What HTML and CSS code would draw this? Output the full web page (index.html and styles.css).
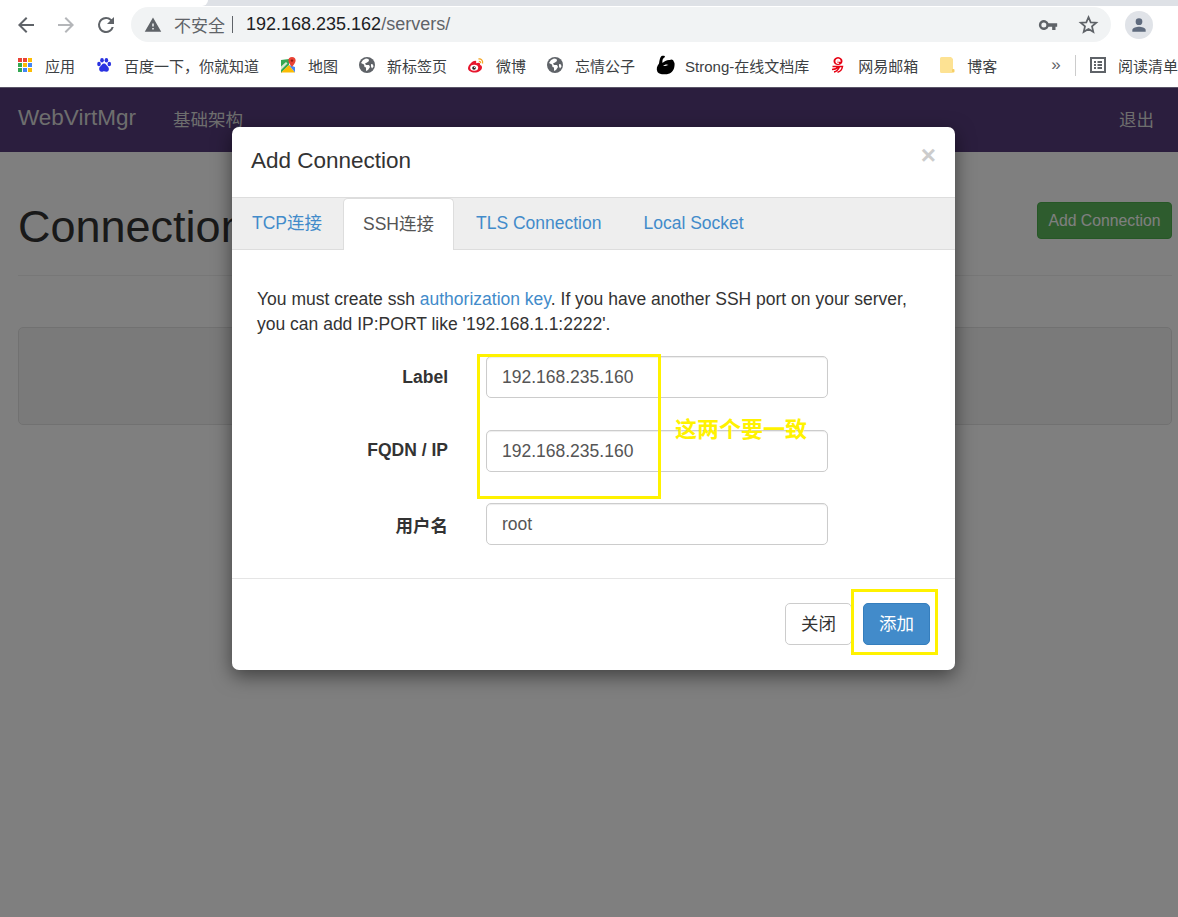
FILE: index.html
```html
<!DOCTYPE html>
<html lang="zh-CN">
<head>
    <meta charset="UTF-8">
    <meta name="viewport" content="width=device-width, initial-scale=1.0">
    <title>WebVirtMgr</title>
    <link rel="stylesheet" href="styles.css">
</head>
<body>

    <!-- 浏览器顶部 -->
    <div class="browser">
        <div class="tabstrip"><span class="tab-edge"></span></div>
        <div class="toolbar">
            <svg class="tool" viewBox="0 0 24 24"><path fill="#5f6368" d="M20 11H7.83l5.59-5.59L12 4l-8 8 8 8 1.41-1.41L7.83 13H20z"/></svg>
            <svg class="tool" viewBox="0 0 24 24"><path fill="#b4b6b9" d="M4 11h12.17l-5.59-5.59L12 4l8 8-8 8-1.41-1.41L16.17 13H4z"/></svg>
            <svg class="tool" viewBox="0 0 24 24"><path fill="#5f6368" d="M17.65 6.35A7.96 7.96 0 0 0 12 4a8 8 0 1 0 7.74 10h-2.08A6 6 0 1 1 12 6c1.66 0 3.14.69 4.22 1.78L13 11h7V4z"/></svg>
            <div class="omnibox">
                <svg class="warn" viewBox="0 0 24 24"><path fill="#5f6368" d="M1 21h22L12 2zm12-3h-2v-2h2zm0-4h-2v-4h2z"/></svg>
                <span class="insecure">不安全</span>
                <span class="url-sep"></span>
                <span class="url"><b>192.168.235.162</b>/servers/</span>
                <svg class="key" viewBox="0 0 24 24"><path fill="#5f6368" d="M12.65 10A6 6 0 1 0 12.65 14H17v4h4v-4h2v-4zM7 15a3 3 0 1 1 0-6 3 3 0 0 1 0 6z"/></svg>
                <svg class="star" viewBox="0 0 24 24"><path fill="none" stroke="#5f6368" stroke-width="2" d="M12 3.6l2.5 5.9 6.4.5-4.9 4.2 1.5 6.2-5.5-3.3-5.5 3.3 1.5-6.2L3.1 10l6.4-.5z"/></svg>
            </div>
            <div class="avatar">
                <svg viewBox="0 0 24 24"><circle cx="12" cy="8" r="4" fill="#5f6b7e"/><path fill="#5f6b7e" d="M4 20v-2c0-2.7 5.3-4 8-4s8 1.300 8 4v2z"/></svg>
            </div>
        </div>
        <div class="bookmarks">
            <a class="mark">
                <svg viewBox="0 0 16 16">
                    <rect x="1" y="1" width="4" height="4" fill="#ea4335"/><rect x="6" y="1" width="4" height="4" fill="#ea4335"/><rect x="11" y="1" width="4" height="4" fill="#fbbc04"/>
                    <rect x="1" y="6" width="4" height="4" fill="#34a853"/><rect x="6" y="6" width="4" height="4" fill="#fbbc04"/><rect x="11" y="6" width="4" height="4" fill="#4285f4"/>
                    <rect x="1" y="11" width="4" height="4" fill="#34a853"/><rect x="6" y="11" width="4" height="4" fill="#4285f4"/><rect x="11" y="11" width="4" height="4" fill="#fbbc04"/>
                </svg>应用</a>
            <a class="mark">
                <svg viewBox="0 0 16 16" fill="#2932e1">
                    <ellipse cx="3" cy="7" rx="1.800" ry="2.200"/><ellipse cx="6" cy="3.200" rx="1.800" ry="2.300"/><ellipse cx="10.400" cy="3.200" rx="1.800" ry="2.300"/><ellipse cx="13.300" cy="7" rx="1.800" ry="2.200"/>
                    <path d="M8 6.500c-2 0-2.500 2-4 3.300-1.500 1.400-1 5 1.700 5 1 0 1.500-.5 2.300-.5s1.500.5 2.500.5c2.700 0 3-3.500 1.500-5C10.500 8.500 10 6.500 8 6.500z"/>
                </svg>百度一下，你就知道</a>
            <a class="mark">
                <svg viewBox="0 0 16 16">
                    <path fill="#34a853" d="M1 3l8-1v6l-8 8z"/><path fill="#fbbc04" d="M1 15.500L9 8l6 7.500z"/><path fill="#4285f4" d="M9 8l6 2v5.500z"/><path fill="#d8e8d0" d="M1 9.500L6 5l1.500 1.500L1 13z"/>
                    <path fill="#ea4335" d="M12 0a3.600 3.600 0 0 0-3.600 3.600C8.400 6.200 12 10 12 10s3.600-3.800 3.600-6.400A3.600 3.600 0 0 0 12 0z"/><circle cx="12" cy="3.600" r="1.200" fill="#8e1c13"/>
                </svg>地图</a>
            <a class="mark">
                <svg viewBox="0 0 16 16"><circle cx="8" cy="8" r="8" fill="#5f6368"/><path fill="#fff" d="M7 1.500L4 3 2 6l3 1.500.5 2.500 1.500.5V14l2-1 2-3-1-2H7L6 6.500 8 5.500 10 4 9.500 2zM12 7l2 .5.500 2-1.500 2-1-2z"/></svg>新标签页</a>
            <a class="mark">
                <svg viewBox="0 0 16 16">
                    <path fill="#e6162d" d="M6.500 15.500C3.300 15.500 0 14 0 11.300 0 9.500 1.300 7.500 3 6c2-1.900 4.300-2.600 5-1.800.4.400.3 1.200 0 2 1.800-.7 3.500-.7 4 .2.300.5.200 1.100 0 1.700 1.200.4 2 1 2 2.300 0 2.600-3.500 5.100-7.500 5.100z"/>
                    <ellipse cx="6.200" cy="10.800" rx="4" ry="3" fill="#fff"/><circle cx="6" cy="11" r="1.800" fill="#222"/><circle cx="6.500" cy="10.500" r=".6" fill="#fff"/>
                    <path fill="none" stroke="#f5a623" stroke-width="1.300" d="M10.500 2c2.500-.6 4.700 1.500 4 4.500M10.800 4.400c1.200-.2 2 .6 1.700 1.800"/>
                </svg>微博</a>
            <a class="mark">
                <svg viewBox="0 0 16 16"><circle cx="8" cy="8" r="8" fill="#5f6368"/><path fill="#fff" d="M7 1.500L4 3 2 6l3 1.500.5 2.500 1.500.5V14l2-1 2-3-1-2H7L6 6.500 8 5.500 10 4 9.500 2zM12 7l2 .5.500 2-1.500 2-1-2z"/></svg>忘情公子</a>
            <a class="mark">
                <svg class="wide" viewBox="0 0 20 20"><path fill="#000" d="M5.500 1C8 .5 9 1 9 2 7 3 6 5 6.500 8c1.500-2 5-3.500 7.500-3 .5-.5 1.500-1 3 0l1.500 3c.5 4-1 9-5 10.500C9 20 3 19.500 1.500 17 0 14 1 11 3 8.500 3.500 5 4 2.500 5.500 1z"/><path fill="#fff" d="M7 11c1.500-1.500 4-2 5.500-1-1.500.5-3 1-5.500 1z"/></svg>Strong-在线文档库</a>
            <a class="mark">
                <svg viewBox="0 0 16 16"><path fill="#e60012" d="M8 0a5 4 0 0 1 4.500 4.300c0 2.200-2 3.700-4.500 3.700S3.500 6.500 3.500 4.300A5 4 0 0 1 8 0z"/><path fill="none" stroke="#fff" stroke-width="1.300" d="M6 4h4a2 2 0 1 0-1 2"/><path fill="none" stroke="#e60012" stroke-width="1.500" d="M2.500 9.500h10c-.5 3-2 5-5 5.800M2 12.500c2.500 0 5-1 6.500-3M4 15c2.500-.5 4.500-2.500 5.500-5.500"/></svg>网易邮箱</a>
            <a class="mark">
                <svg viewBox="0 0 16 16"><path fill="#fde293" d="M1 1.500A1.500 1.500 0 0 1 2.500 0H12l2 2v12.500a1.500 1.500 0 0 1-1.500 1.500h-10A1.500 1.500 0 0 1 1 14.500z"/><rect x="13" y="12" width="2.500" height="3.500" rx="1" fill="#f6cf66"/></svg>博客</a>
            <span class="more">»</span>
            <span class="mark-sep"></span>
            <a class="mark reading">
                <svg viewBox="0 0 16 16"><rect x="1" y="1" width="14" height="14" fill="none" stroke="#5f6368" stroke-width="2"/><path fill="#5f6368" d="M4 4h2v2H4zM7.500 4H12v2H7.500zM4 7h2v2H4zM7.500 7H12v2H7.500zM4 10h2v2H4zM7.500 10H12v2H7.500z"/></svg>阅读清单</a>
        </div>
    </div>

    <!-- 页面 -->
    <div class="page">
        <nav class="navbar">
            <a class="brand">WebVirtMgr</a>
            <a class="nav-link">基础架构</a>
            <a class="nav-link logout">退出</a>
        </nav>
        <div class="container">
            <div class="page-head">
                <h1>Connections</h1>
                <a class="btn-add">Add Connection</a>
            </div>
            <div class="well"></div>
        </div>

        <div class="backdrop"></div>

        <div class="modal">
            <div class="modal-header">
                <h4>Add Connection</h4>
                <span class="close">×</span>
            </div>
            <ul class="tabs">
                <li>TCP连接</li>
                <li class="current">SSH连接</li>
                <li>TLS Connection</li>
                <li>Local Socket</li>
            </ul>
            <div class="modal-body">
                <p>You must create ssh <a>authorization key</a>. If you have another SSH port on your server, you can add IP:PORT like '192.168.1.1:2222'.</p>
                <div class="form-row">
                    <label>Label</label>
                    <div class="input">192.168.235.160</div>
                </div>
                <div class="form-row">
                    <label>FQDN / IP</label>
                    <div class="input">192.168.235.160</div>
                </div>
                <div class="form-row">
                    <label>用户名</label>
                    <div class="input">root</div>
                </div>
            </div>
            <div class="modal-footer">
                <a class="btn btn-default">关闭</a>
                <a class="btn btn-primary">添加</a>
            </div>
        </div>
    </div>

    <!-- 截图上的标注 -->
    <div class="mark-box box-inputs"></div>
    <div class="mark-box box-add"></div>
    <div class="mark-text">这两个要一致</div>

</body>
</html>
```

FILE: styles.css
```css
*{
    box-sizing: border-box;
}
html,body{
    margin: 0;padding: 0;
}
body{
    width: 1178px;height: 917px;overflow: hidden;position: relative;background: #fff;
    font-family: "Liberation Sans", "Noto Sans CJK SC", sans-serif;font-size: 17.5px;color: #333;
}
a{
    color: inherit;text-decoration: none;
}

/* browser */
.browser{
    height: 88px;background: #fff;border-bottom: 1px solid #5a5568;
}
.tabstrip{
    height: 6px;background: #dee1e6;
}
.tab-edge{
    display: block;width: 208px;height: 6px;background: #fff;border-bottom-right-radius: 6px;
}
.toolbar{
    height: 37px;display: flex;align-items: center;padding-left: 14px;
}
.tool{
    width: 24px;height: 24px;margin-right: 16px;flex: none;
}
.tool:nth-child(3){
    margin-right: 13px;
}
.omnibox{
    width: 980px;height: 35px;background: #f1f3f4;border-radius: 18px;display: flex;align-items: center;padding-left: 13px;
    font-family: "Liberation Sans", "Noto Sans CJK SC", sans-serif;font-size: 17px;color: #5f6368;
}
.warn{
    width: 18px;height: 18px;margin-right: 12px;
}
.insecure{
    font-size: 17px;
}
.url-sep{
    width: 1px;height: 17px;background: #5f6368;margin: 0 13px 0 7px;
}
.url{
    font-size: 18px;flex: 1;
}
.url b{
    font-weight: normal;color: #202124;
}
.key{
    width: 20px;height: 20px;margin-right: 20px;
}
.star{
    width: 21px;height: 21px;margin-right: 12px;
}
.avatar{
    width: 28px;height: 28px;border-radius: 50%;background: #e0e3e8;margin-left: 14px;flex: none;padding: 4px;
}
.avatar svg{
    display: block;width: 20px;height: 20px;
}
.bookmarks{
    height: 44px;display: flex;align-items: center;padding-left: 17px;font-size: 15px;color: #3c4043;white-space: nowrap;
}
.mark{
    display: flex;align-items: center;margin-right: 21px;
}
.mark svg{
    width: 16px;height: 16px;margin-right: 12px;flex: none;
}
.mark svg.wide{
    width: 20px;height: 20px;margin-right: 9px;
}
.more{
    margin-left: 33px;font-size: 17px;color: #5f6368;width: 10px;
}
.mark-sep{
    width: 1px;height: 21px;background: #ccc;margin: 0 14px;
}
.mark.reading{
    margin: 0;
}

/* page */
.page{
    height: 829px;position: relative;
}
.navbar{
    height: 64px;background: #563d7c;display: flex;align-items: center;padding: 0 24px 4px 18px;color: #ddd;
}
.brand{
    font-size: 22.5px;margin-right: 37px;
}
.logout{
    margin-left: auto;
}
.container{
    padding: 0 6px 0 18px;
}
.page-head{
    height: 124px;border-bottom: 1px solid #eee;display: flex;justify-content: space-between;position: relative;padding-top: 50px;
}
.page-head h1{
    margin: 0;font-size: 45px;font-weight: normal;line-height: 50px;color: #333;
}
.btn-add{
    position: absolute;right: 0;top: 50px;width: 135px;height: 37px;line-height: 35px;text-align: center;
    background: #5cb85c;border: 1px solid #4cae4c;border-radius: 4px;color: #fff;font-size: 15.75px;
}
.well{
    height: 98px;margin-top: 51px;background: #f5f5f5;border: 1px solid #e3e3e3;border-radius: 5px;
}
.backdrop{
    position: absolute;top: 0;left: 0;right: 0;bottom: 0;background: rgba(0,0,0,0.5);
}

/* modal */
.modal{
    position: absolute;left: 232px;top: 39px;width: 723px;height: 543px;background: #fff;border-radius: 7px;
    box-shadow: 0 6px 19px rgba(0,0,0,0.5);display: flex;flex-direction: column;
}
.modal-header{
    height: 70px;display: flex;justify-content: space-between;padding: 0 19px;
}
.modal-header h4{
    margin: 0;font-size: 22.5px;font-weight: normal;line-height: 68px;color: #333;
}
.close{
    font-size: 26px;font-weight: bold;color: #ccc;line-height: 56px;
}
.tabs{
    list-style: none;margin: 0;padding: 0;height: 53px;display: flex;background: #eee;border-top: 1px solid #ddd;border-bottom: 1px solid #ddd;color: #428bca;
}
.tabs li{
    padding: 0 20px;line-height: 50px;margin-right: 2px;
}
.tabs li:first-child{
    margin-right: 1px;
}
.tabs .current{
    background: #fff;color: #555;height: 52px;border: 1px solid #ddd;border-bottom: 0;border-radius: 5px 5px 0 0;padding: 0 19px;margin-right: 2px;
}
.modal-body{
    flex: 1;padding: 37px 25px 0;
}
.modal-body p{
    margin: 0 0 19px;line-height: 25px;
}
.modal-body p a{
    color: #428bca;
}
.form-row{
    display: flex;align-items: center;margin-bottom: 31.5px;
}
.form-row label{
    width: 191px;text-align: right;font-weight: bold;margin-right: 38px;
}
.input{
    width: 342px;height: 42px;line-height: 40px;padding: 0 15px;border: 1px solid #ccc;border-radius: 5px;color: #555;
    box-shadow: inset 0 1px 1px rgba(0,0,0,0.075);
}
.modal-footer{
    height: 92px;border-top: 1px solid #e5e5e5;display: flex;justify-content: flex-end;align-items: flex-start;padding: 24px 25px 0 0;
}
.btn{
    height: 42px;line-height: 40px;padding: 0 15px;border: 1px solid #ccc;border-radius: 5px;margin-left: 11px;
}
.btn-primary{
    background: #428bca;border-color: #357ebd;color: #fff;
}

/* annotations */
.mark-box{
    position: absolute;border: 3px solid #fff200;
}
.box-inputs{
    left: 477px;top: 354px;width: 184px;height: 145px;
}
.box-add{
    left: 851px;top: 589px;width: 87px;height: 66px;
}
.mark-text{
    position: absolute;left: 675px;top: 415px;font-size: 22px;font-weight: bold;color: #fff200;line-height: 30px;
}
```
